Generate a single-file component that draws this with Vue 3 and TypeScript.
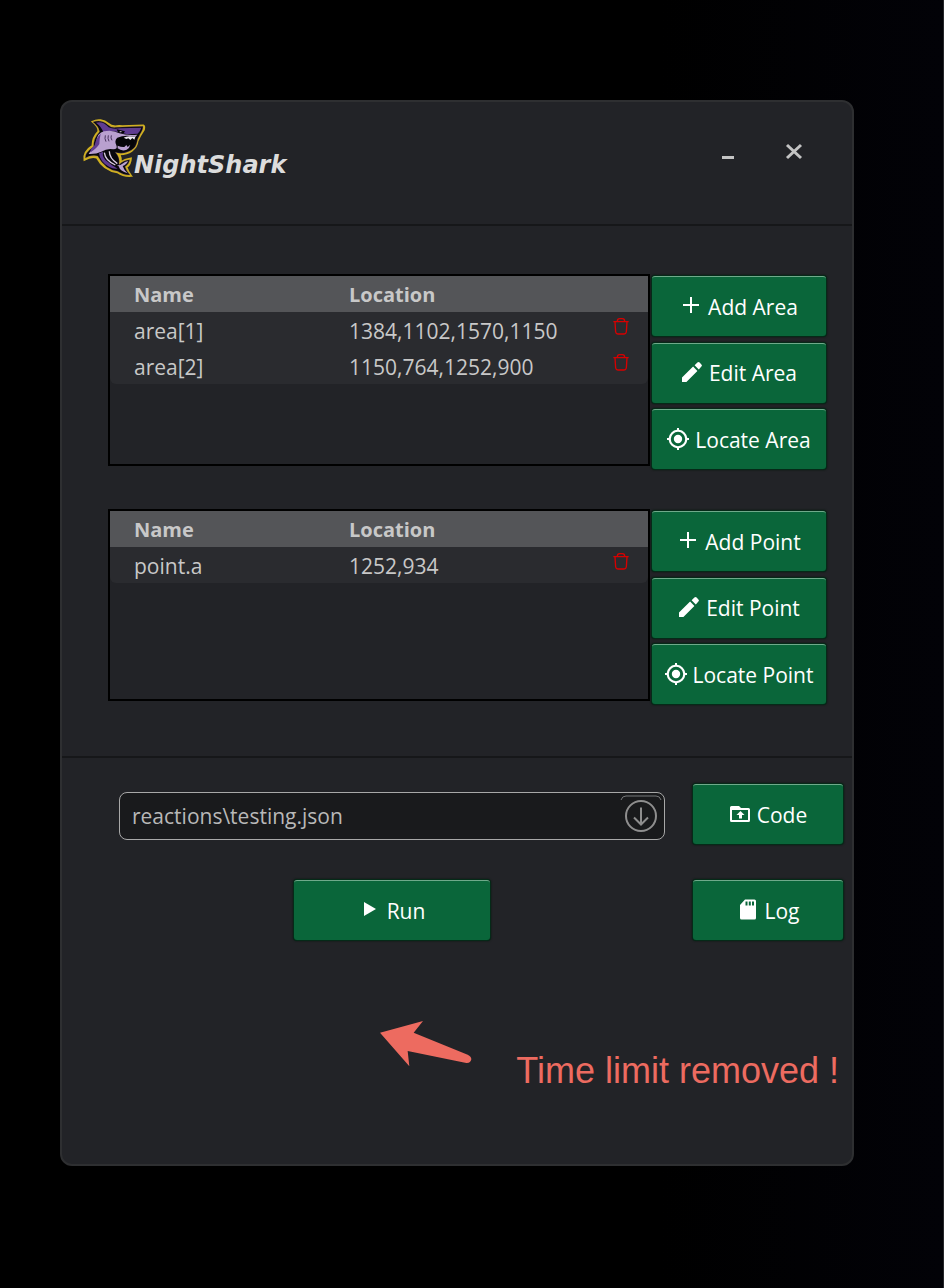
<script setup lang="ts">
import { ref } from 'vue'

type IconName = 'plus' | 'pencil' | 'target' | 'folder' | 'card' | 'play'

interface Entry {
  name: string
  location: string
}

interface Group {
  id: string
  label: string
  rows: Entry[]
  actions: { icon: IconName; text: string }[]
}

const groups = ref<Group[]>([
  {
    id: 'areas',
    label: 'Areas',
    rows: [
      { name: 'area[1]', location: '1384,1102,1570,1150' },
      { name: 'area[2]', location: '1150,764,1252,900' },
    ],
    actions: [
      { icon: 'plus', text: 'Add Area' },
      { icon: 'pencil', text: 'Edit Area' },
      { icon: 'target', text: 'Locate Area' },
    ],
  },
  {
    id: 'points',
    label: 'Points',
    rows: [{ name: 'point.a', location: '1252,934' }],
    actions: [
      { icon: 'plus', text: 'Add Point' },
      { icon: 'pencil', text: 'Edit Point' },
      { icon: 'target', text: 'Locate Point' },
    ],
  },
])

const files = ['reactions\\testing.json']
const selected = ref(files[0])

const iconPaths: Record<IconName, string> = {
  plus: 'M10 2h2v7h7v2h-7v7h-2v-7H3V9h7z',
  pencil: 'M1 16.600V21h4.400L16.400 9.900l-4.300-4.300zM20.400 5.600a1.500 1.500 0 0 0 0-2.200L18.600 1.600a1.500 1.500 0 0 0-2.200 0L13.600 4.300l4.200 4.200z',
  target: 'M11 6.800a4.200 4.200 0 1 0 0 8.400 4.200 4.200 0 0 0 0-8.400zM20.300 10a9.400 9.400 0 0 0-8.300-8.300V0h-2v1.700A9.400 9.400 0 0 0 1.700 10H0v2h1.700a9.400 9.400 0 0 0 8.300 8.300V22h2v-1.700a9.400 9.400 0 0 0 8.300-8.300H22v-2zM11 18.200a7.200 7.200 0 1 1 0-14.400 7.200 7.200 0 0 1 0 14.400z',
  folder: 'M2.500 3Q1 3 1 4.500v13Q1 19 2.500 19h17q1.500 0 1.500-1.500v-11Q21 5 19.500 5H12l-2-2zM3 7h16v10H3zM7.500 12H10v3.500h3V12h2.500l-4-4z',
  card: 'M8 .5h9.500Q19 .5 19 2v17q0 1.500-1.500 1.500h-13Q3 20.500 3 19V6zM8.500 2.500v4h2v-4zM11.800 2.500v4h2v-4zM15 2.500v4h2v-4z',
  play: 'M5 3v14l12-7z',
}

function removeRow(group: Group, index: number) {
  group.rows.splice(index, 1)
}
</script>

<template>
  <div class="desktop">
    <main class="window">
      <header class="titlebar">
        <div class="brand">
          <svg class="shark" viewBox="0 0 222 216" aria-hidden="true">
            <path
              class="glow"
              d="M43 29C58 21 78 23 91 35Q99 43 112 43Q120 40 133 42L196 40Q201 42 198 53Q187 69 179 87Q177 106 161 117Q148 126 125 127Q130 137 129 151Q139 142 159 139Q158 157 146 166Q150 180 160 192Q137 194 118 181Q77 176 56 137Q39 132 19 144Q15 119 43 101Q43 76 61 58Q61 43 43 29Z"
            />
            <path
              class="ink"
              d="M45 30C60 24 77 27 89 38Q99 48 114 46L195 43Q196 52 186 67Q178 80 176 94Q171 113 150 119Q130 127 112 121Q127 137 123 158Q135 145 155 143Q153 156 141 164Q146 179 156 189Q136 190 119 178Q81 173 59 132Q39 128 22 138Q20 122 47 104Q46 78 65 59Q62 43 45 30Z"
            />
            <path
              class="deep"
              d="M54 32Q76 26 92 46Q105 52 125 49L190 47Q187 57 179 65L148 67L119 60Q95 53 76 61Q70 43 54 32Z"
            />
            <path
              class="pale"
              d="M55 88Q58 63 78 58Q102 52 124 64Q148 71 178 68L172 75Q142 67 118 77Q108 86 115 100Q120 112 106 112Q88 108 70 119Q54 127 32 126Q37 115 54 106Q61 100 55 88Z"
            />
            <path class="deep" d="M50 100Q54 77 68 65Q64 82 64 96Q57 108 38 121Q34 113 50 100Z" />
            <path class="black" d="M114 85Q133 71 154 79L170 84L164 106Q142 113 128 104Q114 99 114 85Z" />
            <path class="white" d="M137 77Q150 69 172 75L169 83L163 78L157 84L151 79L145 81Z" />
            <path class="pale" d="M119 101Q130 106 139 105L145 99L149 105L157 98Q155 108 146 113Q132 119 119 109Z" />
            <path class="black" d="M116 52L141 58L137 64L120 61Z" />
            <path class="white" d="M124 57L133 59L127 61Z" />
            <path class="gill" d="M82 70Q79 80 84 89M91 70Q88 79 93 88M100 70Q97 78 102 85" />
            <path class="deep" d="M63 124Q66 151 94 165Q107 172 119 170Q101 160 89 149Q71 138 75 119Z" />
            <path class="stripe" d="M79 122Q82 146 112 159M94 118Q94 139 118 155" />
            <path class="pale" d="M109 155Q121 164 132 156Q141 149 150 147Q146 158 134 162Q139 177 149 184Q126 178 122 163Z" />
          </svg>
          <h1 class="brand-name">NightShark</h1>
        </div>
        <div class="window-controls">
          <button type="button" aria-label="Minimize">
            <svg viewBox="0 0 24 24"><path d="M6 17.500h12" /></svg>
          </button>
          <button type="button" aria-label="Close">
            <svg viewBox="0 0 24 24"><path d="M5 5l14 13M19 5L5 18" /></svg>
          </button>
        </div>
      </header>

      <section class="groups">
        <div v-for="group in groups" :key="group.id" class="group">
          <div class="list">
            <table :aria-label="group.label">
              <colgroup>
                <col class="col-name" />
                <col />
                <col class="col-delete" />
              </colgroup>
              <thead>
                <tr>
                  <th scope="col">Name</th>
                  <th scope="col" colspan="2">Location</th>
                </tr>
              </thead>
              <tbody>
                <tr v-for="(row, index) in group.rows" :key="row.name">
                  <td>{{ row.name }}</td>
                  <td>{{ row.location }}</td>
                  <td class="delete-cell">
                    <button type="button" class="delete" :aria-label="'Delete ' + row.name" @click="removeRow(group, index)">
                      <svg viewBox="0 0 48 51">
                        <path d="M1 11H47M13 10Q13 2 20 2H28Q35 2 35 10M6 12L8 42Q9 48 15 48H33Q39 48 40 42L42 12" />
                      </svg>
                    </button>
                  </td>
                </tr>
              </tbody>
            </table>
          </div>
          <div class="actions">
            <button v-for="action in group.actions" :key="action.text" type="button" class="action">
              <svg class="icon" viewBox="0 0 22 22" aria-hidden="true">
                <path fill-rule="evenodd" :d="iconPaths[action.icon]" />
              </svg>
              <span>{{ action.text }}</span>
            </button>
          </div>
        </div>
      </section>

      <section class="runner">
        <div class="picker">
          <select v-model="selected" aria-label="Reaction file">
            <option v-for="file in files" :key="file" :value="file">{{ file }}</option>
          </select>
          <svg class="picker-arrow" viewBox="0 0 42 42" aria-hidden="true">
            <path class="rim" d="M1 5Q2 1 6 1H36Q40 1 41 5" />
            <circle cx="21" cy="21" r="15" />
            <path d="M21 12.500V29M14 22.500l7 7 7-7" />
          </svg>
        </div>
        <button type="button" class="action">
          <svg class="icon" viewBox="0 0 22 22" aria-hidden="true">
            <path fill-rule="evenodd" :d="iconPaths.folder" />
          </svg>
          <span>Code</span>
        </button>
        <button type="button" class="action run">
          <svg class="icon" viewBox="0 0 22 22" aria-hidden="true"><path :d="iconPaths.play" /></svg>
          <span>Run</span>
        </button>
        <button type="button" class="action">
          <svg class="icon" viewBox="0 0 22 22" aria-hidden="true">
            <path fill-rule="evenodd" :d="iconPaths.card" />
          </svg>
          <span>Log</span>
        </button>
      </section>

      <aside class="note">
        <svg class="pointer" viewBox="0 0 276 138" aria-hidden="true">
          <path d="M0 35L129 0L101 35L263 101Q274 106 274 115Q272 127 259 126L83 90L88 136Z" />
        </svg>
        <p>Time limit removed !</p>
      </aside>
    </main>
  </div>
</template>

<style>
body {
  margin: 0;
  background: #000000;
}
</style>

<style scoped>
* {
  box-sizing: border-box;
}

.desktop {
  display: flex;
  min-height: 100vh;
  padding: 100px 89px 122px 60px;
  border-right: 1px solid #25262a;
  background: linear-gradient(90deg, #000000 70%, #020207);
  color: #c8c8c8;
  font-family: "Open Sans", "Noto Sans", sans-serif;
  font-size: 21px;
  line-height: 28px;
}

.window {
  flex: 1;
  border: 2px solid #2e2f31;
  border-radius: 12px;
  background: #222327;
}

button {
  padding: 0;
  border: 0;
  background: none;
  color: inherit;
  font: inherit;
}

.titlebar {
  display: flex;
  justify-content: space-between;
  height: 124px;
  padding: 10px 46px 0 16px;
  border-bottom: 2px solid #161719;
}

.brand {
  display: flex;
}

.shark {
  width: 74px;
  height: 72px;
  margin-right: -18px;
}

.glow {
  fill: #d8b81c;
  stroke: #d0b01f;
  stroke-width: 5;
}

.ink {
  fill: #09080c;
  stroke: #5d3f80;
  stroke-width: 1;
}

.deep {
  fill: #5f3b91;
}

.pale {
  fill: #b9a0cf;
}

.white {
  fill: #eee9f2;
}

.black {
  fill: #050507;
}

.gill {
  fill: none;
  stroke: #49345f;
  stroke-width: 3;
}

.stripe {
  fill: none;
  stroke: #d9cbe2;
  stroke-width: 4;
}

.brand-name {
  margin: 37px 0 0;
  color: #dcdcdc;
  font: italic bold 24px/32px "DejaVu Sans", sans-serif;
}

.window-controls {
  display: flex;
  gap: 42px;
  padding-top: 28px;
}

.window-controls button {
  width: 24px;
  height: 24px;
}

.window-controls svg {
  display: block;
  fill: none;
  stroke: #c4c4c4;
  stroke-width: 3;
}

.groups {
  display: grid;
  gap: 40px;
  height: 532px;
  padding: 48px 26px 0 46px;
  align-content: start;
  border-bottom: 2px solid #161719;
}

.group {
  display: flex;
  gap: 2px;
}

.list {
  flex: 1;
  height: 192px;
  border: 2px solid #000000;
}

table {
  width: 100%;
  border-collapse: collapse;
  table-layout: fixed;
}

.col-name {
  width: 215px;
}

.col-delete {
  width: 54px;
}

th,
td {
  height: 36px;
  padding: 1px 0 0 24px;
  text-align: left;
}

th {
  padding-top: 2px;
  background: #545558;
  font-size: 20px;
  font-weight: 700;
}

td {
  background: #2a2b2f;
}

tbody tr:last-child td:first-child {
  border-bottom-left-radius: 6px;
}

tbody tr:last-child td:last-child {
  border-bottom-right-radius: 6px;
}

td.delete-cell {
  padding: 0 0 8px;
  text-align: center;
}

.delete {
  display: block;
  width: 16px;
  height: 17px;
  margin: 0 auto;
}

.delete svg {
  display: block;
  fill: none;
  stroke: #d80000;
  stroke-width: 4;
}

.actions {
  display: flex;
  flex-direction: column;
  justify-content: space-between;
  width: 174px;
  height: 193px;
  margin-top: 2px;
}

.action {
  display: flex;
  align-items: center;
  justify-content: center;
  gap: 6px;
  height: 60px;
  border-top: 1px solid #6fa98a;
  border-radius: 3px;
  background: #0a663a;
  box-shadow: 0 0 0 1px #052a18, 0 0 2px 1px #06180f;
  color: #ffffff;
  white-space: nowrap;
}

.icon {
  width: 22px;
  height: 22px;
  margin-bottom: 2px;
  fill: #ffffff;
}

.runner {
  display: grid;
  grid-template-columns: 1fr 150px;
  gap: 36px 28px;
  padding: 26px 9px 0 57px;
}

.picker {
  position: relative;
  align-self: center;
  margin-top: 4px;
}

.picker select {
  display: block;
  width: 100%;
  height: 48px;
  padding: 0 60px 0 12px;
  border: 1px solid #a8a8a8;
  border-radius: 8px;
  appearance: none;
  background: #191a1c;
  color: #b8b8b8;
  font: inherit;
}

.picker-arrow {
  position: absolute;
  top: 3px;
  right: 3px;
  width: 42px;
  height: 42px;
  fill: none;
  stroke: #8e8e8e;
  stroke-width: 2;
  pointer-events: none;
}

.picker-arrow .rim {
  stroke: #77787a;
  stroke-width: 1;
}

.run {
  justify-self: center;
  width: 196px;
}

.note {
  display: flex;
  justify-content: flex-end;
  gap: 44px;
  padding: 81px 13px 0 0;
  color: #ed6b60;
}

.pointer {
  width: 92px;
  height: 46px;
  fill: #ed6b60;
}

.note p {
  margin: 28px 0 0;
  font: 36px/44px "Liberation Sans", sans-serif;
}
</style>
